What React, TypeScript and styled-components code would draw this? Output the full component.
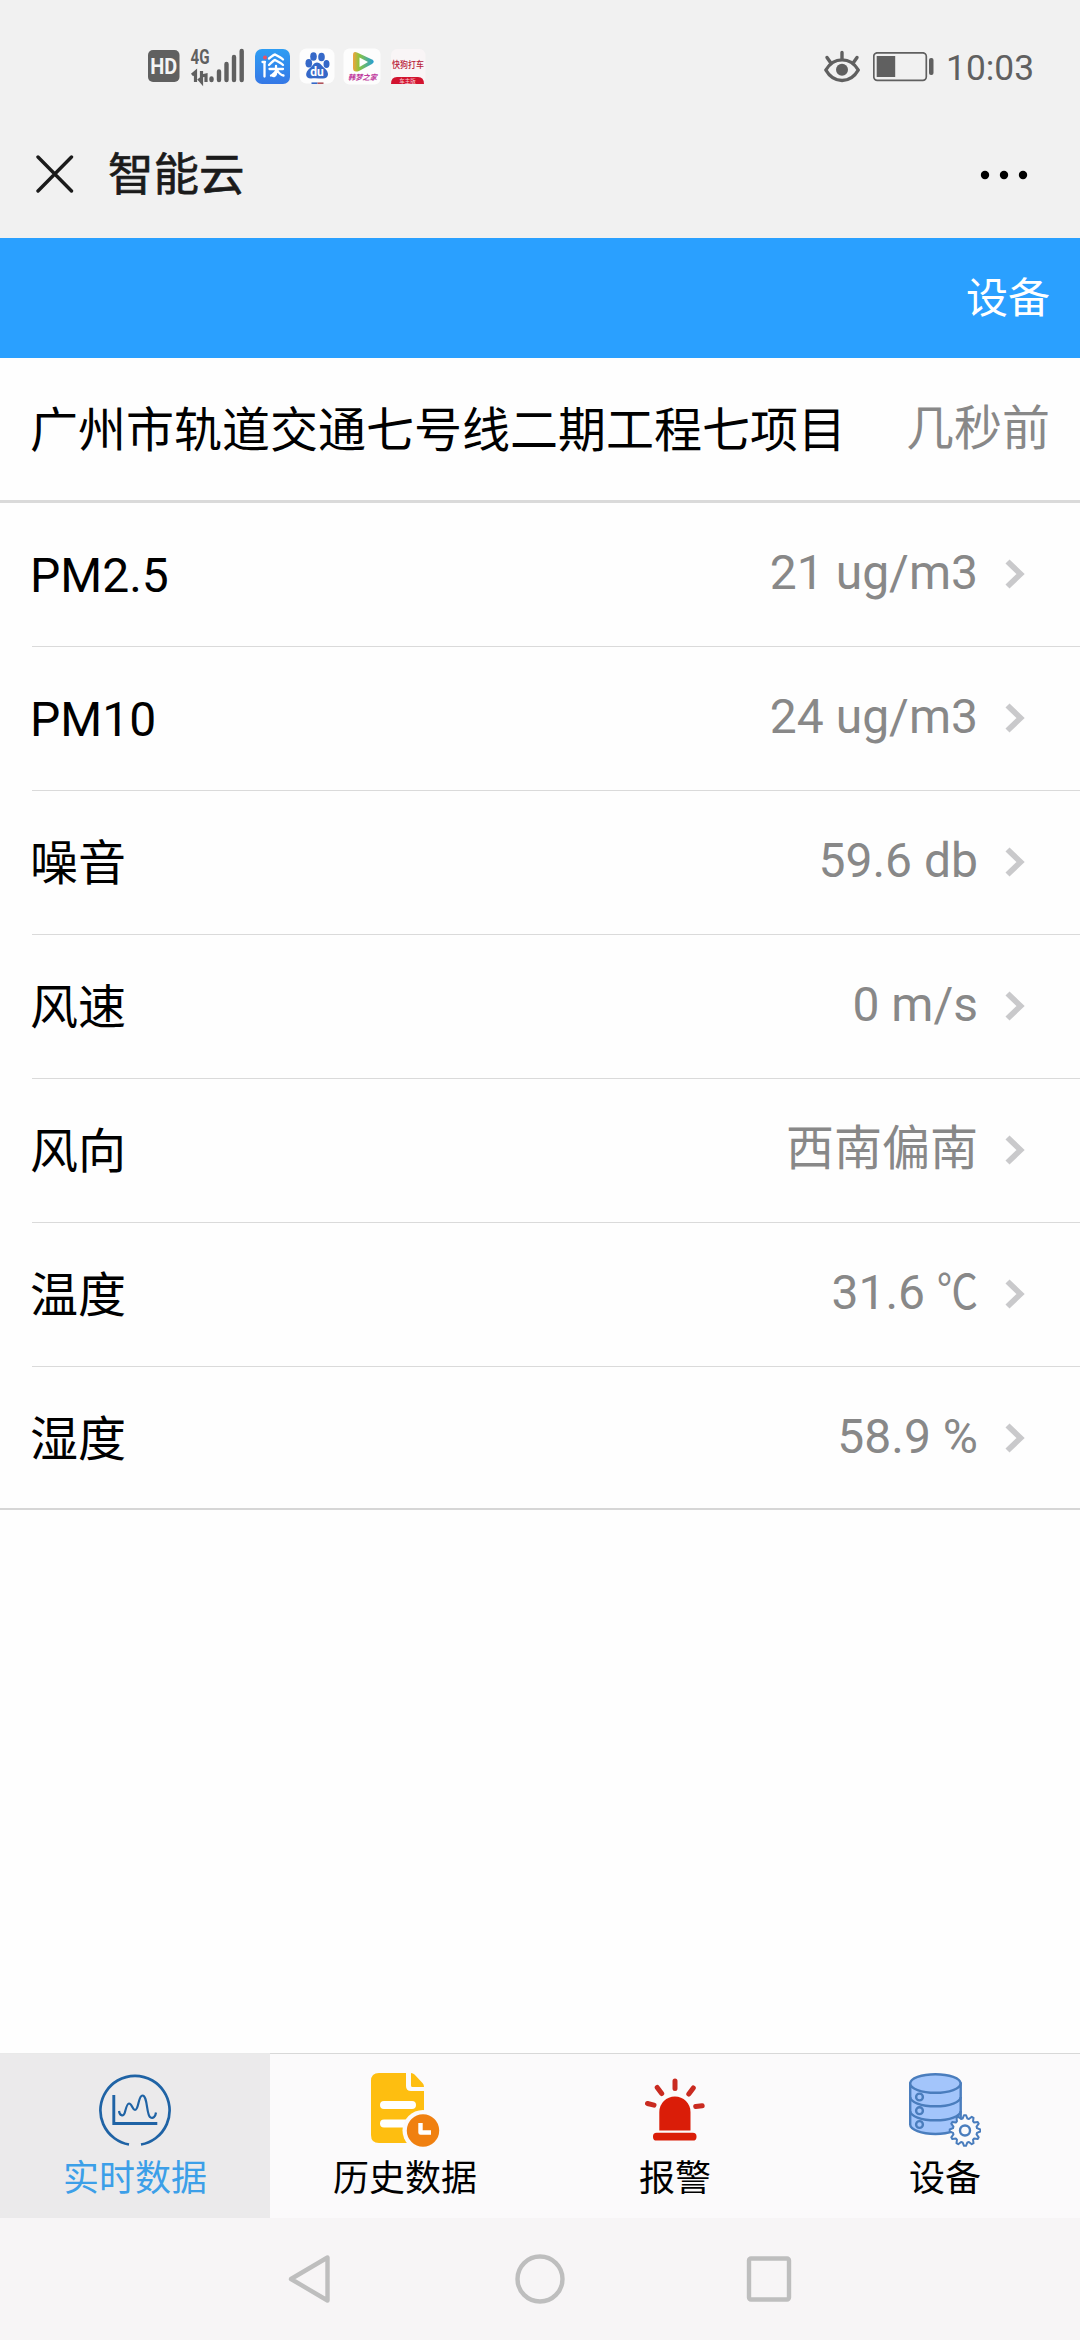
import React from 'react';
import styled, { createGlobalStyle } from 'styled-components';

const GlobalStyle = createGlobalStyle`
  * { box-sizing: border-box; }
  html, body { margin: 0; padding: 0; background: #fefefe; }
  body { font-family: Roboto, "Noto Sans CJK SC", sans-serif; }
`;

const Screen = styled.div`
  width: 1080px;
  height: 2340px;
  display: flex;
  flex-direction: column;
  background: #fefefe;
  overflow: hidden;
`;

const StatusBar = styled.header`
  height: 112px;
  padding: 24px 46px 0 147px;
  display: flex;
  justify-content: space-between;
  align-items: flex-start;
  background: #f1f1f1;
  color: #606060;
`;

const StatusGroup = styled.div<{ $gap?: number }>`
  display: flex;
  align-items: center;
  height: 86px;
  gap: ${(p) => p.$gap ?? 0}px;
`;

const Clock = styled.span`
  font-size: 35.3px;
  line-height: 42px;
  padding-top: 1px;
`;

const TitleBar = styled.div`
  height: 126px;
  padding: 0 52px 2px 36px;
  display: flex;
  align-items: center;
  background: #f1f1f1;
`;

const PageTitle = styled.h1`
  flex: 1;
  margin: 0 0 0 34px;
  padding-top: 4px;
  font-size: 45.5px;
  line-height: 60px;
  font-weight: 400;
  -webkit-text-stroke: 0.7px #1b1b1b;
  color: #1b1b1b;
`;

const ActionBar = styled.div`
  height: 120px;
  padding: 2px 30px 0;
  display: flex;
  justify-content: flex-end;
  align-items: center;
  background: #2aa0ff;
  color: #fff;
  font-size: 42px;
  line-height: 60px;
`;

const StationRow = styled.div`
  height: 145px;
  padding: 0 30px;
  display: flex;
  justify-content: space-between;
  align-items: center;
  border-bottom: 3px solid #dadada;
  font-size: 48px;
  line-height: 72px;
`;

const Name = styled.span`
  color: #000;
  padding-top: 4px;
`;

const Muted = styled.span`
  color: #888;
`;

const List = styled.ul`
  list-style: none;
  margin: 0;
  padding: 0 0 0 32px;
  border-bottom: 2px solid #d6d6d6;
`;

const Row = styled.li`
  height: 144px;
  padding: 0 55px 2px 0;
  display: flex;
  align-items: center;
  border-bottom: 1px solid #dadada;
  font-size: 48px;
  line-height: 72px;
  &:last-child { border-bottom: 0; height: 141px; padding-bottom: 0; }
`;

const RowLabel = styled(Name)`
  margin-left: -2px;
`;

const RowValue = styled(Muted)`
  margin-left: auto;
  margin-right: 27px;
  padding-bottom: 2px;
`;

const CelsiusUnit = styled.span`
  display: inline-block;
  margin-left: -7px;
  transform: scaleX(0.86);
  transform-origin: right center;
`;

const Filler = styled.div`
  flex: 1;
`;

const TabBar = styled.nav`
  height: 165px;
  display: grid;
  grid-template-columns: repeat(4, 1fr);
  background: #fbfafb;
`;

const Tab = styled.button<{ $active?: boolean }>`
  border: 0;
  border-top: 1px solid ${(p) => (p.$active ? '#e9e9e9' : '#d8d8d8')};
  padding: 19px 0 0;
  display: flex;
  flex-direction: column;
  align-items: center;
  gap: 3px;
  background: ${(p) => (p.$active ? '#ebeaeb' : 'transparent')};
  color: ${(p) => (p.$active ? '#3c9fe8' : '#000')};
  font-family: inherit;
  font-size: 36px;
  line-height: 54px;
`;

const SystemNav = styled.footer`
  height: 122px;
  padding: 0 288px;
  display: flex;
  justify-content: space-between;
  align-items: center;
  background: #f7f5f6;
`;

const CJK = '"Noto Sans CJK SC", sans-serif';

const StatusLeftIcons = () => (
  <svg width="282" height="44" viewBox="147 45 282 44">
    <rect x="148" y="50" width="31.500" height="32" rx="5" fill="#606060" />
    <text x="163.700" y="73.500" fontSize="22" fontWeight="700" fill="#f4f4f4" textAnchor="middle" textLength="27" lengthAdjust="spacingAndGlyphs" fontFamily="Roboto, sans-serif">HD</text>
    <text x="190.500" y="64" fontSize="20" fontWeight="700" fill="#606060" textLength="19" lengthAdjust="spacingAndGlyphs" fontFamily="Roboto, sans-serif">4G</text>
    <g stroke="#606060" strokeWidth="3.200" fill="none">
      <path d="M192 75l3.500-3V82M201.500 71v11l-3-3.500M201.500 76l4.500-1V82" />
    </g>
    <g stroke="#606060" strokeWidth="4.400" strokeLinecap="round">
      <path d="M211.500 78.500v1.500M219 71.500v8.500M226.500 64v16M234 57v23M241.700 51v29" />
    </g>
    <defs>
      <linearGradient id="deep" x1="0" y1="0" x2="0" y2="1">
        <stop offset="0" stopColor="#2e9df3" />
        <stop offset="1" stopColor="#3578e6" />
      </linearGradient>
      <linearGradient id="play" x1="0" y1="0" x2="1" y2="0">
        <stop offset="0" stopColor="#f2a33c" />
        <stop offset="0.300" stopColor="#8ac43f" />
        <stop offset="1" stopColor="#259fd6" />
      </linearGradient>
    </defs>
    <rect x="255" y="49" width="35" height="35" rx="7" fill="url(#deep)" />
    <g stroke="#fff" strokeWidth="2.300" fill="none" strokeLinecap="round">
      <path d="M264.500 62v14.500M262.500 62h2.500" />
      <path d="M269 58.500q5-4 6-4q6 3 8 5M269 65q5-5 6-5q6 3 8 5M269.500 69h13.500M276 66v8q-1 3-4 1.500M276 71q-3 4-5 4.500M277 70q3 5 6.500 5.500" />
    </g>
    <circle cx="265" cy="57.500" r="2" fill="#ee5161" />
    <rect x="299.500" y="48.500" width="35" height="35" rx="7" fill="#fdfdfd" />
    <g fill="#3568c8">
      <ellipse cx="308.800" cy="63.300" rx="3.300" ry="4.200" />
      <ellipse cx="313.500" cy="56.500" rx="3.300" ry="4.300" />
      <ellipse cx="321.500" cy="57" rx="3.300" ry="4.300" />
      <ellipse cx="326.500" cy="64" rx="3" ry="4" />
      <path d="M317 62.500c3 0 4.500 3 7 5.200c6 4.500 5 10.800-1 10.800c-4 0-8-.6-12 0c-6 0-6.500-6-1-10.500c3-2.500 4-5.500 7-5.500z" />
    </g>
    <text x="317" y="76" fontSize="12" fontWeight="700" fill="#fff" textAnchor="middle" fontFamily="Roboto, sans-serif">du</text>
    <path d="M311.500 83.200h6" stroke="#3568c8" strokeWidth="1.600" />
    <path d="M317.500 83.200h6" stroke="#b0545c" strokeWidth="1.600" />
    <rect x="343.500" y="48.500" width="37" height="36" rx="6" fill="#fdfdfd" />
    <path d="M353 55q0-4 4-2.500l15 7q3.500 2 0 4.500l-13 7q-6 2-6-3z" fill="url(#play)" />
    <path d="M359.500 57.500l8.500 4.500l-8.500 5z" fill="#fff" />
    <text x="362.500" y="80" fontSize="7.500" fontWeight="700" fill="#c03a9c" textAnchor="middle" textLength="29" lengthAdjust="spacingAndGlyphs" fontStyle="italic" fontFamily={CJK}>韩梦之家</text>
    <rect x="391" y="49" width="34.500" height="35" rx="6" fill="#f9f5f6" />
    <text x="408" y="67.500" fontSize="9" fontWeight="500" fill="#b8233a" textAnchor="middle" textLength="32" lengthAdjust="spacingAndGlyphs" fontFamily={CJK}>快狗打车</text>
    <path d="M391 84q0-7 6-7h21q6 0 6 7z" fill="#d2132f" />
    <text x="407.500" y="82.500" fontSize="5.500" fill="#f7ccd2" textAnchor="middle" fontFamily={CJK}>车主版</text>
  </svg>
);

const EyeIcon = () => (
  <svg width="38" height="34" viewBox="822 50 38 34" fill="none" stroke="#606060" strokeWidth="3.400" strokeLinecap="round">
    <path d="M824.800 70c8-13.500 24.500-13.500 32.500 0c-8 14-24.500 14-32.500 0z" strokeLinejoin="round" />
    <circle cx="841" cy="69.800" r="6" fill="#606060" stroke="none" />
    <path d="M841 52.500v6M826 57.500l3.500 5M856 57.500l-3.500 5" />
  </svg>
);

const BatteryIcon = () => (
  <svg width="61" height="30" viewBox="875 52 61 30">
    <rect x="875.800" y="52.800" width="52.500" height="27.500" rx="3.500" fill="none" stroke="#606060" strokeWidth="1.700" />
    <rect x="878.700" y="56" width="18.500" height="21" fill="#606060" />
    <rect x="931" y="58" width="4.500" height="17" rx="2" fill="#606060" />
  </svg>
);

const CloseIcon = () => (
  <svg width="38" height="38" viewBox="0 0 38 38" stroke="#1b1b1b" strokeWidth="3.400" strokeLinecap="round">
    <path d="M2 2l33.500 34M35.500 2L2 36" />
  </svg>
);

const MoreIcon = () => (
  <svg width="48" height="12" viewBox="0 -2 48 12" fill="#000">
    <circle cx="5" cy="5" r="4.200" />
    <circle cx="24" cy="5" r="4.200" />
    <circle cx="43" cy="5" r="4.200" />
  </svg>
);

const Chevron = () => (
  <svg width="20" height="30" viewBox="0 0 20 30" fill="none" stroke="#c9c9cb" strokeWidth="5.800">
    <path d="M2.500 2.500L15.500 15L2.500 27.500" />
  </svg>
);

const RealtimeIcon = () => (
  <svg width="72" height="76" viewBox="0 0 72 76" fill="none" stroke="#1f63a5" strokeWidth="2.700">
    <path d="M30 71.500A34.600 34.600 0 1 1 42 71.500" />
    <path d="M14.800 22v28.500h43.500" strokeWidth="2.900" />
    <path d="M20 38c.5 4 4.500 7 6 1c1-4 2-8.500 4-8.500c3 0 3.500 6.500 6 6.500c4 0 3-14.500 7.500-14.500c5 0 4 19 7.500 21.500c3 2.500 5.500-.5 6-4.500" strokeWidth="2.200" />
  </svg>
);

const HistoryIcon = () => (
  <svg width="72" height="76" viewBox="0 0 72 76">
    <path d="M10 0h27v13q0 5 5 5h13v52H10q-8 0-8-8V8q0-8 8-8z" fill="#febe10" />
    <path d="M42 0q2 0 3.500 1.500L53.500 10q1.500 1.500 1.500 4H43.500q-1.500 0-1.500-1.500z" fill="#febe10" />
    <path d="M15 32h28M15 50.500h28" stroke="#fff" strokeWidth="8" strokeLinecap="round" />
    <circle cx="54" cy="57.500" r="20.500" fill="#fbfafb" />
    <circle cx="54" cy="57.500" r="16.200" fill="#f08010" />
    <path d="M51.500 50v9.500h10.500" fill="none" stroke="#fff" strokeWidth="4.400" strokeLinejoin="round" />
  </svg>
);

const AlarmIcon = () => (
  <svg width="72" height="76" viewBox="0 0 72 76">
    <path d="M20.300 57.500V39a15.600 15.600 0 0 1 31.200 0v18.500z" fill="#da1d08" />
    <rect x="14" y="59.700" width="43.500" height="7.800" rx="3.600" fill="#da1d08" />
    <path d="M36 8v7.500M18.200 14.500l4.500 6M54.300 15l-4.500 6M8.500 30.500l6.500 1.700M56.700 33.500l6.500-.7" stroke="#c92a20" strokeWidth="5" strokeLinecap="round" />
  </svg>
);

const GEAR = Array.from({ length: 48 }, (_, i) => {
  const a = ((i - 0.5) / 48) * Math.PI * 2;
  const r = i % 4 < 2 ? 15.3 : 12.2;
  return `${(56 + r * Math.cos(a)).toFixed(2)},${(57.5 + r * Math.sin(a)).toFixed(2)}`;
}).join(' ');

const DeviceIcon = () => (
  <svg width="72" height="76" viewBox="0 0 72 76" fill="none" stroke="#4a7dbd" strokeWidth="2.400">
    <path d="M1.200 10.500v41c0 5 11 9.500 25.200 9.500s25.300-4.500 25.300-9.500v-41z" fill="#a3c5fb" />
    <ellipse cx="26.400" cy="10.500" rx="25.200" ry="9.300" fill="#a3c5fb" />
    <path d="M1.200 24c0 5 11 9.300 25.200 9.300s25.300-4.300 25.300-9.300M1.200 38c0 5 11 9.300 25.200 9.300s25.300-4.300 25.300-9.300" />
    <circle cx="10.500" cy="24" r="3.400" />
    <circle cx="10.500" cy="37.700" r="3.400" />
    <circle cx="10.500" cy="51.500" r="3.400" />
    <polygon points={GEAR} fill="#fbfafb" strokeLinejoin="round" strokeWidth="2" />
    <circle cx="56" cy="57.500" r="5" />
  </svg>
);

const NavShape = ({ children }: { children: React.ReactNode }) => (
  <svg width="50" height="52" viewBox="0 0 50 52" fill="none" stroke="#bebebe" strokeWidth="4.400" strokeLinejoin="round">
    {children}
  </svg>
);

const readings: { label: string; value: string; celsius?: boolean }[] = [
  { label: 'PM2.5', value: '21 ug/m3' },
  { label: 'PM10', value: '24 ug/m3' },
  { label: '噪音', value: '59.6 db' },
  { label: '风速', value: '0 m/s' },
  { label: '风向', value: '西南偏南' },
  { label: '温度', value: '31.6 ', celsius: true },
  { label: '湿度', value: '58.9 %' },
];

const tabs = [
  { label: '实时数据', Icon: RealtimeIcon },
  { label: '历史数据', Icon: HistoryIcon },
  { label: '报警', Icon: AlarmIcon },
  { label: '设备', Icon: DeviceIcon },
];

export default function App() {
  return (
    <Screen>
      <GlobalStyle />
      <StatusBar>
        <StatusGroup>
          <StatusLeftIcons />
        </StatusGroup>
        <StatusGroup $gap={12}>
          <EyeIcon />
          <BatteryIcon />
          <Clock>10:03</Clock>
        </StatusGroup>
      </StatusBar>
      <TitleBar>
        <CloseIcon />
        <PageTitle>智能云</PageTitle>
        <MoreIcon />
      </TitleBar>
      <ActionBar>设备</ActionBar>
      <StationRow>
        <Name>广州市轨道交通七号线二期工程七项目</Name>
        <Muted>几秒前</Muted>
      </StationRow>
      <List>
        {readings.map((r) => (
          <Row key={r.label}>
            <RowLabel>{r.label}</RowLabel>
            <RowValue>
              {r.value}
              {r.celsius && <CelsiusUnit>℃</CelsiusUnit>}
            </RowValue>
            <Chevron />
          </Row>
        ))}
      </List>
      <Filler />
      <TabBar>
        {tabs.map(({ label, Icon }, i) => (
          <Tab key={label} $active={i === 0}>
            <Icon />
            {label}
          </Tab>
        ))}
      </TabBar>
      <SystemNav>
        <NavShape>
          <path d="M3 26L39.500 4.500v43z" />
        </NavShape>
        <NavShape>
          <circle cx="25" cy="26" r="22.500" />
        </NavShape>
        <NavShape>
          <rect x="7" y="5.500" width="40" height="41" rx="2" />
        </NavShape>
      </SystemNav>
    </Screen>
  );
}
